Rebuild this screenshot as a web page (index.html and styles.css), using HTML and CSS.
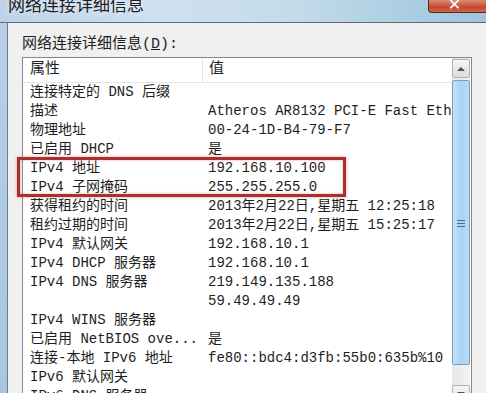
FILE: index.html
```html
<!DOCTYPE html>
<html lang="zh-CN">
<head>
  <meta charset="UTF-8">
  <meta name="viewport" content="width=device-width, initial-scale=1.0">
  <title>网络连接详细信息</title>
  <link rel="stylesheet" href="styles.css">
</head>
<body>
  <div class="window">
    <div class="titlebar">
      <div class="title">网络连接详细信息</div>
      <div class="close"><span>✕</span></div>
    </div>
    <div class="client">
      <div class="label">网络连接详细信息(<u>D</u>):</div>
      <div class="listbox">
        <div class="list">
          <div class="header">
            <div class="col1">属性</div>
            <div class="col2">值</div>
          </div>
          <div class="row"><div class="col1">连接特定的 DNS 后缀</div><div class="col2"></div></div>
          <div class="row"><div class="col1">描述</div><div class="col2">Atheros AR8132 PCI-E Fast Ethernet Controller</div></div>
          <div class="row"><div class="col1">物理地址</div><div class="col2">00-24-1D-B4-79-F7</div></div>
          <div class="row"><div class="col1">已启用 DHCP</div><div class="col2">是</div></div>
          <div class="row"><div class="col1">IPv4 地址</div><div class="col2">192.168.10.100</div></div>
          <div class="row"><div class="col1">IPv4 子网掩码</div><div class="col2">255.255.255.0</div></div>
          <div class="row"><div class="col1">获得租约的时间</div><div class="col2">2013年2月22日,星期五 12:25:18</div></div>
          <div class="row"><div class="col1">租约过期的时间</div><div class="col2">2013年2月22日,星期五 15:25:17</div></div>
          <div class="row"><div class="col1">IPv4 默认网关</div><div class="col2">192.168.10.1</div></div>
          <div class="row"><div class="col1">IPv4 DHCP 服务器</div><div class="col2">192.168.10.1</div></div>
          <div class="row"><div class="col1">IPv4 DNS 服务器</div><div class="col2">219.149.135.188</div></div>
          <div class="row"><div class="col1"></div><div class="col2">59.49.49.49</div></div>
          <div class="row"><div class="col1">IPv4 WINS 服务器</div><div class="col2"></div></div>
          <div class="row"><div class="col1">已启用 NetBIOS ove...</div><div class="col2">是</div></div>
          <div class="row"><div class="col1">连接-本地 IPv6 地址</div><div class="col2">fe80::bdc4:d3fb:55b0:635b%10</div></div>
          <div class="row"><div class="col1">IPv6 默认网关</div><div class="col2"></div></div>
          <div class="row"><div class="col1">IPv6 DNS 服务器</div><div class="col2"></div></div>
        </div>
        <div class="scrollbar">
          <div class="arrow up">
            <svg width="8" height="5" viewBox="0 0 8 5"><path d="M0 5 L4 1 L8 5 Z" fill="#4d5157"/></svg>
          </div>
          <div class="thumb">
            <div class="grip"><i></i><i></i><i></i></div>
          </div>
          <div class="arrow down">
            <svg width="8" height="5" viewBox="0 0 8 5"><path d="M0 0 L4 4 L8 0 Z" fill="#4d5157"/></svg>
          </div>
        </div>
      </div>
    </div>
    <div class="highlight"></div>
  </div>
</body>
</html>
```

FILE: styles.css
```css
body {
  margin: 0;
  padding: 0;
  width: 486px;
  height: 393px;
  overflow: hidden;
  font-family: "Liberation Mono", "Noto Sans CJK SC", monospace;
  color: #1e1e1e;
}
.window {
  position: relative;
  height: 393px;
  display: flex;
  flex-direction: column;
  overflow: hidden;
  background: linear-gradient(to bottom, #b9d0e7, #a9c5e1);
}
.titlebar {
  flex-shrink: 0;
  height: 22px;
  display: flex;
  justify-content: space-between;
  align-items: flex-start;
  background: linear-gradient(to right, #bdd3e9 0%, #cfe0f0 35%, #c4dbea 60%, #aacde2 85%, #9fc6de 100%);
  border-bottom: 1px solid #5e6b78;
}
.title {
  margin-left: 8px;
  margin-top: -3px;
  font-size: 17px;
  line-height: 20px;
  color: #202020;
  text-shadow: 0 0 6px rgba(255, 255, 255, 0.8);
}
.close {
  width: 57px;
  height: 12px;
  border: 1px solid #5a2820;
  border-top: none;
  border-right: none;
  border-bottom-left-radius: 4px;
  background: linear-gradient(to bottom, #d98c73, #c44a31 60%, #d0644a);
  display: flex;
  justify-content: center;
  align-items: flex-end;
  overflow: hidden;
}
.close span {
  color: #ffffff;
  font-family: "DejaVu Sans", sans-serif;
  font-size: 16px;
  line-height: 16px;
  font-weight: bold;
  margin-right: 6px;
  margin-bottom: -1px;
}
.client {
  flex: 1;
  min-height: 0;
  overflow: hidden;
  margin-left: 7px;
  border-left: 1px solid #6f7c8a;
  background: #f0f0f0;
  padding: 13px 0 0 14px;
}
.label {
  font-size: 15px;
  line-height: 18px;
}
.listbox {
  margin-top: 3px;
  width: 448px;
  height: 400px;
  border: 1px solid #828790;
  background: #ffffff;
  display: flex;
}
.list {
  width: 429px;
  overflow: hidden;
  font-size: 14px;
}
.header {
  display: flex;
  height: 24px;
  border-bottom: 1px solid #e5e5e5;
  line-height: 24px;
  font-size: 15px;
}
.header .col1 {
  border-right: 1px solid #e5e5e5;
  width: 172px;
}
.header .col2 {
  padding-left: 6px;
}
.row {
  display: flex;
  height: 19px;
  line-height: 19px;
  white-space: nowrap;
}
.col1 {
  width: 178px;
  padding-left: 7px;
  flex-shrink: 0;
}
.col2 {
  overflow: hidden;
}
.scrollbar {
  width: 18px;
  margin-right: 1px;
  background: linear-gradient(to right, #e6e6e6, #f3f3f3);
  display: flex;
  flex-direction: column;
}
.arrow {
  height: 17px;
  margin-top: 1px;
  border: 1px solid #b0b0b0;
  border-radius: 2px;
  background: linear-gradient(to bottom, #f7f7f7, #dcdcdc);
  display: flex;
  justify-content: center;
  align-items: center;
}
.thumb {
  margin-top: 2px;
  height: 283px;
  border: 1px solid #7a9fbe;
  border-radius: 2px;
  background: linear-gradient(to right, #c4e2f8, #a9d3f2 50%, #b8dbf5);
  display: flex;
  justify-content: center;
  align-items: center;
}
.grip {
  display: flex;
  flex-direction: column;
  gap: 2px;
  margin-top: 2px;
}
.grip i {
  display: block;
  width: 8px;
  height: 1px;
  background: #4e6d8a;
}
.down {
  margin-top: 20px;
}
.highlight {
  position: absolute;
  left: 17px;
  top: 157px;
  width: 323px;
  height: 34px;
  border: 3px solid #a8302e;
  box-shadow: 0 0 3px rgba(220, 90, 90, 0.6), inset 0 0 3px rgba(220, 90, 90, 0.5);
}
```
